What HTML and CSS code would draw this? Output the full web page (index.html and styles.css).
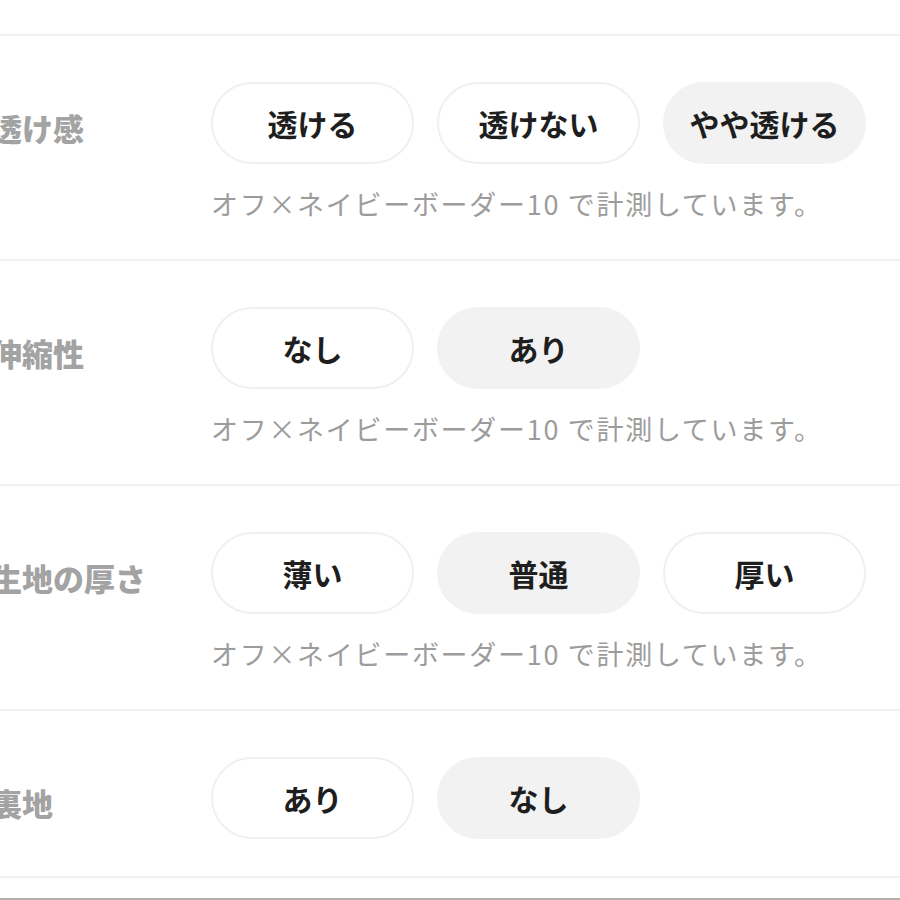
FILE: index.html
```html
<!DOCTYPE html>
<html lang="ja">
<head>
<meta charset="utf-8">
<link rel="stylesheet" href="styles.css">
</head>
<body>
<div class="sheet">
  <section class="row">
    <div class="label">透け感</div>
    <div class="body">
      <div class="options">
        <span class="pill">透ける</span>
        <span class="pill">透けない</span>
        <span class="pill is-on">やや透ける</span>
      </div>
      <p class="note">オフ×ネイビーボーダー10 で計測しています。</p>
    </div>
  </section>
  <section class="row">
    <div class="label">伸縮性</div>
    <div class="body">
      <div class="options">
        <span class="pill">なし</span>
        <span class="pill is-on">あり</span>
      </div>
      <p class="note">オフ×ネイビーボーダー10 で計測しています。</p>
    </div>
  </section>
  <section class="row">
    <div class="label">生地の厚さ</div>
    <div class="body">
      <div class="options">
        <span class="pill">薄い</span>
        <span class="pill is-on">普通</span>
        <span class="pill">厚い</span>
      </div>
      <p class="note">オフ×ネイビーボーダー10 で計測しています。</p>
    </div>
  </section>
  <section class="row">
    <div class="label">裏地</div>
    <div class="body">
      <div class="options">
        <span class="pill">あり</span>
        <span class="pill is-on">なし</span>
      </div>
    </div>
  </section>
</div>
<div class="footer-rule"></div>
</body>
</html>
```

FILE: styles.css
```css
html, body {
  margin: 0;
  padding: 0;
  background: #ffffff;
}
body {
  font-family: "Noto Sans CJK JP", "Noto Sans", sans-serif;
  width: 900px;
  height: 900px;
  overflow: hidden;
  position: relative;
}
.sheet {
  padding-top: 34px;
}
.row {
  display: grid;
  grid-template-columns: 211px 1fr;
  border-top: 2px solid #f1f1f1;
  padding: 46px 0 37px;
}
.row:last-child {
  border-bottom: 2px solid #f1f1f1;
}
.label {
  margin-left: -9px;
  height: 82px;
  display: flex;
  align-items: center;
  padding-top: 8px;
  box-sizing: border-box;
  font-size: 31px;
  font-weight: 900;
  color: #a3a3a3;
  white-space: nowrap;
}
.options {
  display: flex;
  gap: 23px;
}
.pill {
  width: 203px;
  height: 82px;
  box-sizing: border-box;
  border: 2px solid #f0f0f0;
  border-radius: 41px;
  display: flex;
  align-items: center;
  justify-content: center;
  font-size: 30px;
  font-weight: 700;
  color: #1e1e1e;
  background: #ffffff;
}
.pill.is-on {
  background: #f2f2f2;
  border-color: #f2f2f2;
}
.note {
  margin: 22px 0 0;
  font-size: 27px;
  line-height: 36px;
  letter-spacing: 1.7px;
  color: #9c9c9c;
  white-space: nowrap;
}
.footer-rule {
  position: absolute;
  left: 0;
  right: 0;
  bottom: 0;
  height: 2px;
  background: #b0b0b0;
}
```
